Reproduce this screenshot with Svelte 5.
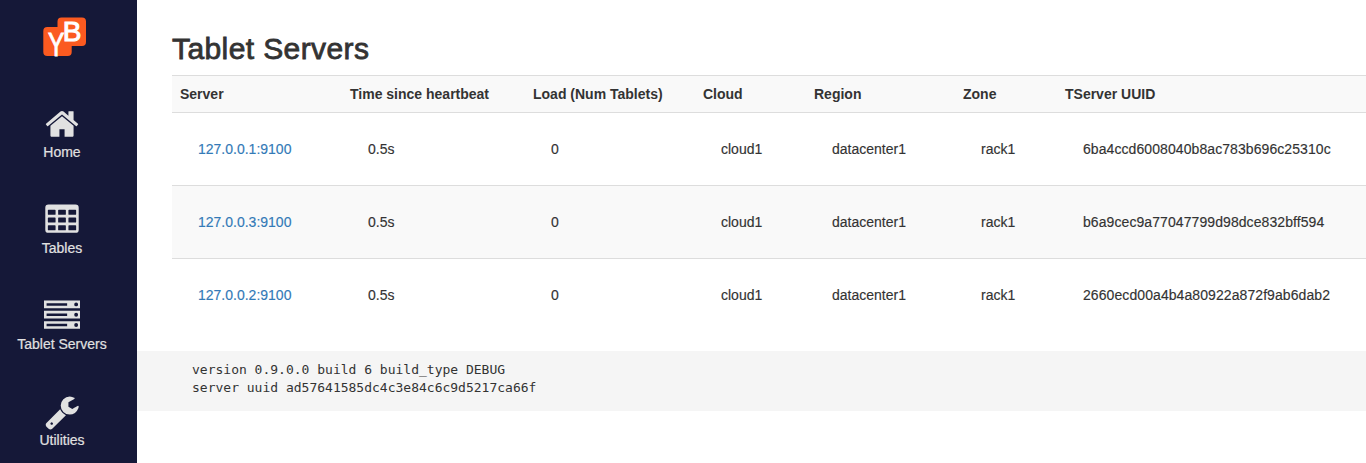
<script>
  const nav = [
    { label: 'Home', icon: 'home' },
    { label: 'Tables', icon: 'table' },
    { label: 'Tablet Servers', icon: 'server' },
    { label: 'Utilities', icon: 'wrench' },
  ];
  const columns = ['Server', 'Time since heartbeat', 'Load (Num Tablets)', 'Cloud', 'Region', 'Zone', 'TServer UUID'];
  const servers = [
    { addr: '127.0.0.1:9100', uuid: '6ba4ccd6008040b8ac783b696c25310c' },
    { addr: '127.0.0.3:9100', uuid: 'b6a9cec9a77047799d98dce832bff594' },
    { addr: '127.0.0.2:9100', uuid: '2660ecd00a4b4a80922a872f9ab6dab2' },
  ];
  const version = 'version 0.9.0.0 build 6 build_type DEBUG\nserver uuid ad57641585dc4c3e84c6c9d5217ca66f';
</script>

<div class="page">
  <nav class="sidebar">
    <svg class="logo" width="44" height="40" viewBox="0 0 44 40">
      <path fill="#fb5a20" d="M18 .4H39a4 4 0 0 1 4 4V25a4 4 0 0 1-4 4H28.700V35a4 4 0 0 1-4 4H4.300a4 4 0 0 1-4-4V14a4 4 0 0 1 4-4H14.500V4.400a4 4 0 0 1 4-4z" />
      <text class="letter" transform="translate(5.100 38.600) scale(.72 1)" font-size="34">Y</text>
      <text class="letter" transform="translate(19.800 24.300) scale(1 1)" font-size="28">B</text>
    </svg>
    {#each nav as item}
      <a class="item" href="#{item.icon}">
        <svg width="36" height="36" viewBox="0 0 1792 1792" fill="currentColor" fill-rule="evenodd">
          {#if item.icon === 'home'}
            <path d="M1472 992v480q0 26-19 45t-45 19h-384v-384h-256v384h-384q-26 0-45-19t-19-45v-480q0-1 .5-3t.5-3l575-474 575 474q1 2 1 6zm223-69l-62 74q-8 9-21 11h-3q-13 0-21-7l-692-577-692 577q-12 8-24 7-13-2-21-11l-62-74q-8-10-7-23.500t11-21.500l719-599q32-26 76-26t76 26l244 204v-195q0-14 9-23t23-9h192q14 0 23 9t9 23v408l219 182q10 8 11 21.500t-7 23.500z" />
          {:else if item.icon === 'table'}
            <path d="M224 128h1344a160 160 0 0 1 160 160v1088a160 160 0 0 1-160 160h-1344a160 160 0 0 1-160-160v-1088a160 160 0 0 1 160-160zM192 416v192q0 32 32 32h320q32 0 32-32v-192q0-32-32-32h-320q-32 0-32 32zm512 0v192q0 32 32 32h320q32 0 32-32v-192q0-32-32-32h-320q-32 0-32 32zm512 0v192q0 32 32 32h320q32 0 32-32v-192q0-32-32-32h-320q-32 0-32 32zM192 800v192q0 32 32 32h320q32 0 32-32v-192q0-32-32-32h-320q-32 0-32 32zm512 0v192q0 32 32 32h320q32 0 32-32v-192q0-32-32-32h-320q-32 0-32 32zm512 0v192q0 32 32 32h320q32 0 32-32v-192q0-32-32-32h-320q-32 0-32 32zM192 1184v192q0 32 32 32h320q32 0 32-32v-192q0-32-32-32h-320q-32 0-32 32zm512 0v192q0 32 32 32h320q32 0 32-32v-192q0-32-32-32h-320q-32 0-32 32zm512 0v192q0 32 32 32h320q32 0 32-32v-192q0-32-32-32h-320q-32 0-32 32z" />
          {:else if item.icon === 'server'}
            {#each [128, 640, 1152] as y}
              <path transform="translate(0 {y})" d="M0 0h1792v384h-1792zM128 128v128h1024v-128zM1504 192a96 96 0 1 0 192 0a96 96 0 1 0-192 0z" />
            {/each}
          {:else}
            <path d="M448 1472q0-26-19-45t-45-19-45 19-19 45 19 45 45 19 45-19 19-45zm644-420l-682 682q-37 37-90 37-52 0-91-37l-106-108q-38-36-38-90 0-53 38-91l681-681q39 98 114.500 173.500t173.500 114.500zm634-435q0 39-23 106-47 134-164.500 217.500t-258.500 83.500q-185 0-316.500-131.500t-131.500-316.500 131.500-316.500 316.500-131.500q58 0 121.500 16.500t107.500 46.500q16 11 16 28t-16 28l-293 169v224l193 107q5-3 79-48.500t135.500-81 70.500-35.500q15 0 23.500 10t8.500 25z" />
          {/if}
        </svg>
        <span>{item.label}</span>
      </a>
    {/each}
  </nav>

  <main>
    <h2>Tablet Servers</h2>
    <table>
      <colgroup>
        <col class="c1" /><col class="c2" /><col class="c3" /><col class="c4" /><col class="c5" /><col class="c6" /><col />
      </colgroup>
      <thead>
        <tr>{#each columns as c}<th>{c}</th>{/each}</tr>
      </thead>
      <tbody>
        {#each servers as s}
          <tr>
            <td><a href="#{s.addr}">{s.addr}</a></td>
            <td>0.5s</td>
            <td>0</td>
            <td>cloud1</td>
            <td>datacenter1</td>
            <td>rack1</td>
            <td class="uuid">{s.uuid}</td>
          </tr>
        {/each}
      </tbody>
    </table>
    <pre>{version}</pre>
  </main>
</div>

<style>
  :global(body) {
    margin: 0;
    background: #fff;
    overflow: hidden;
  }
  .page {
    display: flex;
    height: 463px;
    overflow: hidden;
    font: 14px/20px "Liberation Sans", Arial, sans-serif;
    color: #333;
  }
  .sidebar {
    box-sizing: border-box;
    flex: 0 0 137px;
    width: 137px;
    padding: 17px 13px 0 0;
    display: flex;
    flex-direction: column;
    align-items: center;
    background: #151838;
  }
  .logo {
    flex: none;
    display: block;
    margin: 0 0 49.200px 5px;
    overflow: visible;
  }
  .letter {
    fill: #fff;
    font-family: "Liberation Sans", Arial, sans-serif;
    stroke: #fff;
    stroke-width: 1px;
  }
  .item {
    flex: none;
    display: flex;
    flex-direction: column;
    align-items: center;
    height: 95.800px;
    color: #e1e1e1;
    text-decoration: none;
    -webkit-text-stroke: 0.2px;
  }
  .item svg {
    display: block;
  }
  main {
    flex: 1;
    min-width: 0;
    padding-top: 32px;
    overflow: hidden;
  }
  h2 {
    margin: 0 0 10px 35px;
    font-size: 30px;
    line-height: 33px;
    font-weight: 400;
    letter-spacing: 0.4px;
    -webkit-text-stroke: 0.8px;
  }
  table {
    width: 1210px;
    margin-left: 35px;
    border-collapse: separate;
    border-spacing: 0;
    table-layout: fixed;
  }
  .c1 { width: 170px; }
  .c2 { width: 183px; }
  .c3 { width: 170px; }
  .c4 { width: 111px; }
  .c5 { width: 149px; }
  .c6 { width: 102px; }
  th,
  td {
    border-top: 1px solid #ddd;
    text-align: left;
    vertical-align: top;
    white-space: nowrap;
  }
  th {
    padding: 8px;
    background: #f9f9f9;
  }
  td {
    padding: 26px;
    -webkit-text-stroke: 0.15px;
  }
  tbody tr:nth-child(even) td {
    background: #f9f9f9;
  }
  td a {
    color: #337ab7;
    text-decoration: none;
  }
  .uuid {
    letter-spacing: 0.08px;
  }
  pre {
    box-sizing: border-box;
    height: 60px;
    margin: 20px 0 0;
    padding: 10px 0 0 55px;
    background: #f5f5f5;
    font: 13px/18px "DejaVu Sans Mono", monospace;
  }
</style>
